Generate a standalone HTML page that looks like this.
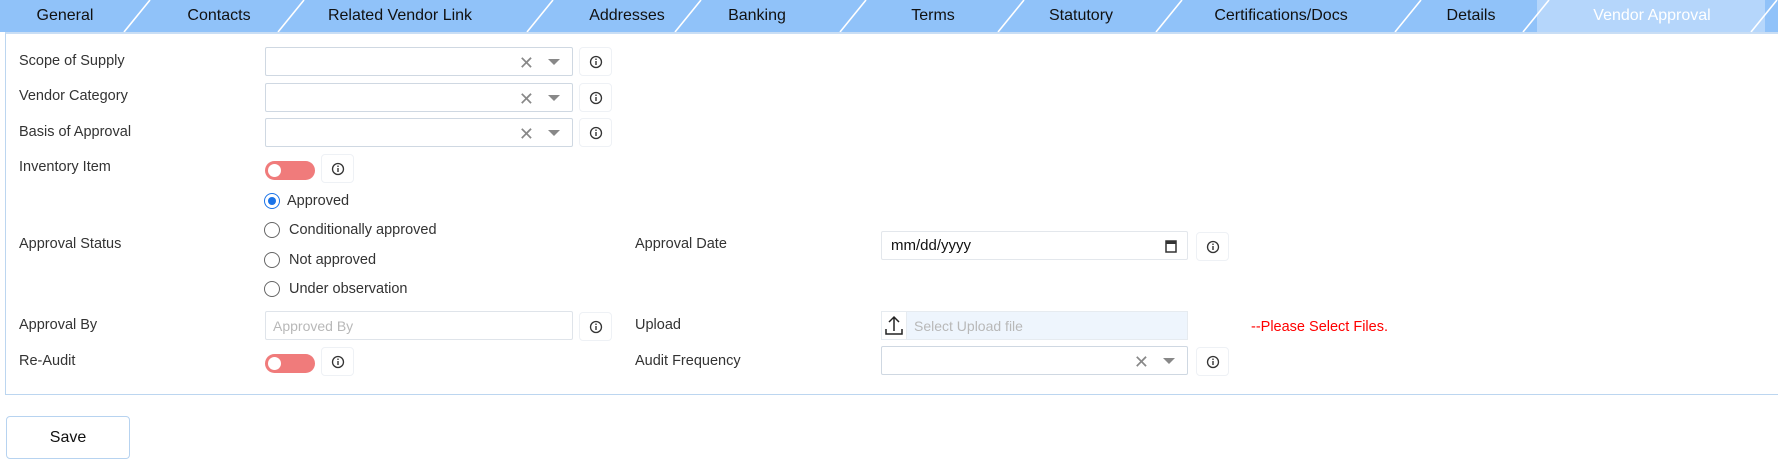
<!DOCTYPE html>
<html><head><meta charset="utf-8"><style>
*{box-sizing:border-box;margin:0;padding:0}
body{width:1778px;height:466px;background:#fff;font-family:"Liberation Sans",Arial,sans-serif;color:#333;position:relative;overflow:hidden}
.a{position:absolute}
.tab{position:absolute;top:0;height:32px;line-height:32px;font-size:16px;color:#111;transform:translateX(-50%);white-space:nowrap}
.lbl{position:absolute;left:19px;font-size:14.5px;color:#333;transform:translateY(-50%)}
.sel{position:absolute;height:29px;border:1px solid #cfd8e2;border-radius:2px;background:#fff}
.sel .x{position:absolute;right:38px;top:5px;font-size:18px;color:#888}
.sel .d{position:absolute;right:12px;top:11px;width:0;height:0;border-left:6px solid transparent;border-right:6px solid transparent;border-top:6px solid #888}
.info{position:absolute;width:33px;height:29px;border:1px solid #eef1f5;border-radius:4px;background:#fff}
.info svg{position:absolute;left:9px;top:7px}
.tog{position:absolute;width:50px;height:19px;border-radius:10px;background:#f07b7b}
.tog:after{content:"";position:absolute;left:3px;top:3px;width:13px;height:13px;border-radius:50%;background:#fff}
.rad{position:absolute;left:264px;width:16px;height:16px;border:1.5px solid #666;border-radius:50%;transform:translateY(-50%)}
.rt{position:absolute;left:289px;font-size:14.5px;color:#333;transform:translateY(-50%)}
</style></head><body>
<div class="a" style="left:0;top:0;width:1778px;height:32px;background:#90c2f9"></div>
<div class="a" style="left:1537px;top:0;width:228px;height:32px;background:#b5d6fb"></div>
<svg class="a" style="left:0;top:0" width="1778" height="32">
<g stroke="#fff" stroke-width="1.6">
<line x1="124" y1="32" x2="150" y2="0"/><line x1="278" y1="32" x2="304" y2="0"/><line x1="527" y1="32" x2="553" y2="0"/><line x1="675" y1="32" x2="701" y2="0"/><line x1="840" y1="32" x2="866" y2="0"/><line x1="998" y1="32" x2="1024" y2="0"/><line x1="1156" y1="32" x2="1182" y2="0"/><line x1="1395" y1="32" x2="1421" y2="0"/><line x1="1523" y1="32" x2="1549" y2="0"/><line x1="1751" y1="32" x2="1777" y2="0"/>
</g></svg>
<div class="tab" style="left:65px">General</div>
<div class="tab" style="left:219px">Contacts</div>
<div class="tab" style="left:400px">Related Vendor Link</div>
<div class="tab" style="left:627px">Addresses</div>
<div class="tab" style="left:757px">Banking</div>
<div class="tab" style="left:933px">Terms</div>
<div class="tab" style="left:1081px">Statutory</div>
<div class="tab" style="left:1281px">Certifications/Docs</div>
<div class="tab" style="left:1471px">Details</div>
<div class="tab" style="left:1652px;color:#fff">Vendor Approval</div>
<div class="a" style="left:5px;top:32px;width:1780px;height:363px;border:1px solid #bcd6f0;border-top:2px solid #c9def5"></div>

<div class="lbl" style="top:61px">Scope of Supply</div>
<div class="sel" style="left:265px;top:47px;width:308px"><span class="x">✕</span><span class="d"></span></div>
<div class="info" style="left:579px;top:47px"><svg width="14" height="14"><circle cx="7" cy="7" r="5.5" fill="none" stroke="#333" stroke-width="1.3"/><line x1="7" y1="6" x2="7" y2="10" stroke="#333" stroke-width="1.4"/><circle cx="7" cy="4.2" r="0.8" fill="#333"/></svg></div>
<div class="lbl" style="top:96px">Vendor Category</div>
<div class="sel" style="left:265px;top:83px;width:308px"><span class="x">✕</span><span class="d"></span></div>
<div class="info" style="left:579px;top:83px"><svg width="14" height="14"><circle cx="7" cy="7" r="5.5" fill="none" stroke="#333" stroke-width="1.3"/><line x1="7" y1="6" x2="7" y2="10" stroke="#333" stroke-width="1.4"/><circle cx="7" cy="4.2" r="0.8" fill="#333"/></svg></div>
<div class="lbl" style="top:132px">Basis of Approval</div>
<div class="sel" style="left:265px;top:118px;width:308px"><span class="x">✕</span><span class="d"></span></div>
<div class="info" style="left:579px;top:118px"><svg width="14" height="14"><circle cx="7" cy="7" r="5.5" fill="none" stroke="#333" stroke-width="1.3"/><line x1="7" y1="6" x2="7" y2="10" stroke="#333" stroke-width="1.4"/><circle cx="7" cy="4.2" r="0.8" fill="#333"/></svg></div>
<div class="lbl" style="top:167px">Inventory Item</div>
<div class="tog" style="left:265px;top:161px"></div>
<div class="info" style="left:321px;top:154px"><svg width="14" height="14"><circle cx="7" cy="7" r="5.5" fill="none" stroke="#333" stroke-width="1.3"/><line x1="7" y1="6" x2="7" y2="10" stroke="#333" stroke-width="1.4"/><circle cx="7" cy="4.2" r="0.8" fill="#333"/></svg></div>

<div class="rad" style="top:201px;border-color:#1a73e8"><div style="position:absolute;left:2.5px;top:2.5px;width:8px;height:8px;border-radius:50%;background:#1a73e8"></div></div>
<div class="rt" style="top:201px;left:287px">Approved</div>
<div class="rad" style="top:230px"></div><div class="rt" style="top:230px">Conditionally approved</div>
<div class="rad" style="top:260px"></div><div class="rt" style="top:260px">Not approved</div>
<div class="rad" style="top:289px"></div><div class="rt" style="top:289px">Under observation</div>
<div class="lbl" style="top:244px">Approval Status</div>

<div class="lbl" style="left:635px;top:244px">Approval Date</div>
<div class="sel" style="left:881px;top:231px;width:307px;border-color:#e3e7ec"><span style="position:absolute;left:9px;top:5px;font-size:15px;color:#111">mm/dd/yyyy</span>
<svg class="a" style="right:10px;top:7px" width="12" height="14"><rect x="1" y="2" width="10" height="11" fill="none" stroke="#333" stroke-width="1.5"/><rect x="1" y="2" width="10" height="3" fill="#333"/></svg></div>
<div class="info" style="left:1196px;top:232px"><svg width="14" height="14"><circle cx="7" cy="7" r="5.5" fill="none" stroke="#333" stroke-width="1.3"/><line x1="7" y1="6" x2="7" y2="10" stroke="#333" stroke-width="1.4"/><circle cx="7" cy="4.2" r="0.8" fill="#333"/></svg></div>

<div class="lbl" style="top:325px">Approval By</div>
<div class="sel" style="left:265px;top:311px;width:308px;border-color:#dfe4ea"><span style="position:absolute;left:7px;top:6px;font-size:14px;color:#b8b8b8">Approved By</span></div>
<div class="info" style="left:579px;top:312px"><svg width="14" height="14"><circle cx="7" cy="7" r="5.5" fill="none" stroke="#333" stroke-width="1.3"/><line x1="7" y1="6" x2="7" y2="10" stroke="#333" stroke-width="1.4"/><circle cx="7" cy="4.2" r="0.8" fill="#333"/></svg></div>
<div class="lbl" style="left:635px;top:325px">Upload</div>
<div class="a" style="left:881px;top:311px;width:307px;height:29px;border:1px solid #e6ebf0;background:#eef5fd"></div>
<div class="a" style="left:881px;top:311px;width:26px;height:29px;border:1px solid #e6ebf0;background:#fff">
<svg width="24" height="27"><path d="M12 5v14M7 10l5-5 5 5M4 17v5h16v-5" fill="none" stroke="#222" stroke-width="1.5"/></svg></div>
<div class="a" style="left:914px;top:318px;font-size:14px;color:#b8b8b8">Select Upload file</div>
<div class="a" style="left:1251px;top:319px;font-size:14.5px;color:#f00">--Please Select Files.</div>

<div class="lbl" style="top:361px">Re-Audit</div>
<div class="tog" style="left:265px;top:354px"></div>
<div class="info" style="left:321px;top:347px"><svg width="14" height="14"><circle cx="7" cy="7" r="5.5" fill="none" stroke="#333" stroke-width="1.3"/><line x1="7" y1="6" x2="7" y2="10" stroke="#333" stroke-width="1.4"/><circle cx="7" cy="4.2" r="0.8" fill="#333"/></svg></div>
<div class="lbl" style="left:635px;top:361px">Audit Frequency</div>
<div class="sel" style="left:881px;top:346px;width:307px"><span class="x">✕</span><span class="d"></span></div>
<div class="info" style="left:1196px;top:347px"><svg width="14" height="14"><circle cx="7" cy="7" r="5.5" fill="none" stroke="#333" stroke-width="1.3"/><line x1="7" y1="6" x2="7" y2="10" stroke="#333" stroke-width="1.4"/><circle cx="7" cy="4.2" r="0.8" fill="#333"/></svg></div>

<div class="a" style="left:6px;top:416px;width:124px;height:43px;border:1px solid #b7d3f0;border-radius:4px;text-align:center;line-height:41px;font-size:16px;color:#111">Save</div>
</body></html>
